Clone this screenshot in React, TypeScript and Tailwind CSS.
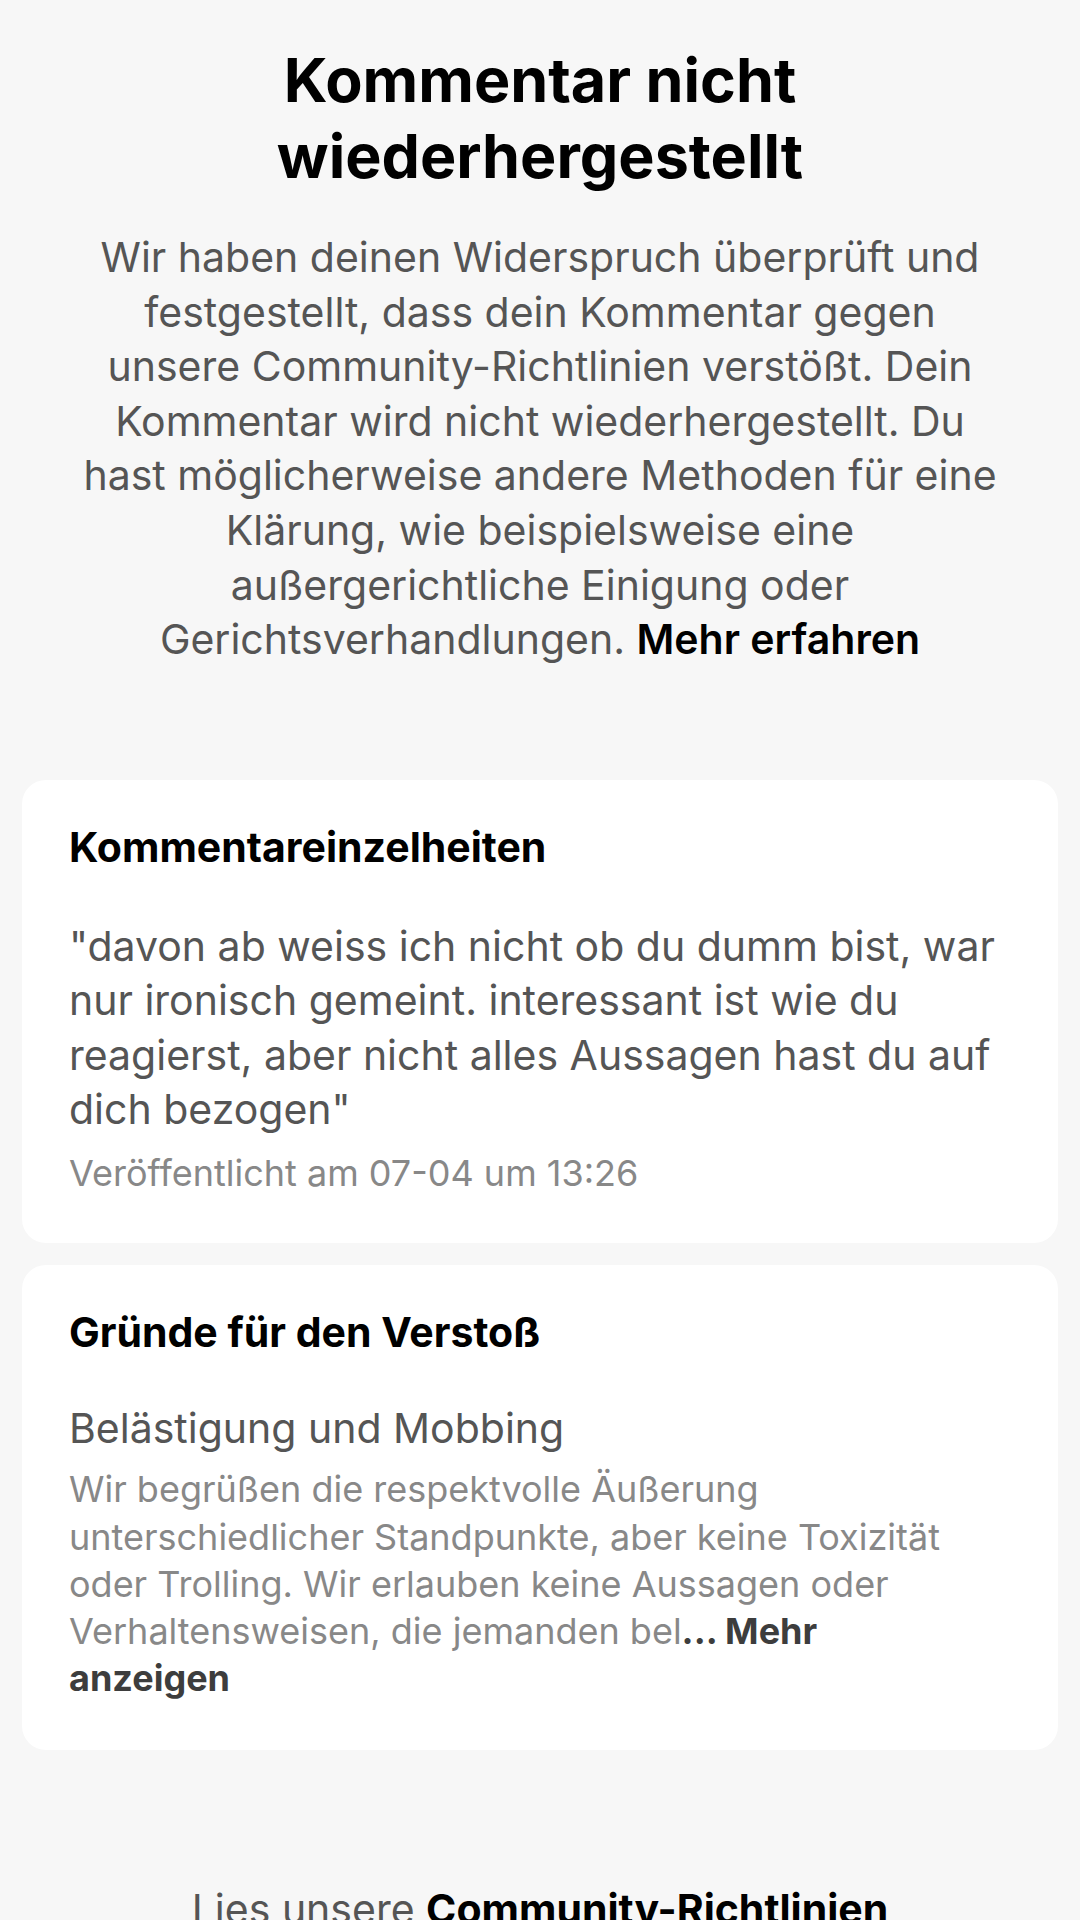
const font = { fontFamily: "Inter, Roboto, 'Noto Sans', sans-serif" };

function Card({ title, children }: { title: string; children: React.ReactNode }) {
  return (
    <section className="mx-[22px] rounded-[24px] bg-white px-[47px] pt-[45px] pb-[48px]">
      <h2 className="text-[41px] font-bold leading-[44px] text-black">{title}</h2>
      {children}
    </section>
  );
}

export default function App() {
  return (
    <div className="min-h-[1920px] w-[1080px] overflow-hidden bg-[#f7f7f7]" style={font}>
      <header className="flex flex-col items-center px-[75px] pt-[42px]">
        <h1 className="text-center text-[61px] font-bold leading-[76px] text-black">
          Kommentar nicht
          <br />
          wiederhergestellt
        </h1>
        <p className="mt-[36px] text-center text-[41px] leading-[54.6px] text-[#555]">
          Wir haben deinen Widerspruch überprüft und festgestellt, dass dein Kommentar gegen
          unsere Community-Richtlinien verstößt. Dein Kommentar wird nicht wiederhergestellt. Du
          hast möglicherweise andere Methoden für eine Klärung, wie beispielsweise eine
          außergerichtliche Einigung oder Gerichtsverhandlungen.{" "}
          <span className="font-semibold text-black">Mehr erfahren</span>
        </p>
      </header>

      <main className="mt-[113px] flex flex-col gap-[22px]">
        <Card title="Kommentareinzelheiten">
          <p className="mt-[50px] text-[41px] leading-[54.4px] text-[#555]">
            "davon ab weiss ich nicht ob du dumm bist, war nur ironisch gemeint. interessant ist wie
            du reagierst, aber nicht alles Aussagen hast du auf dich bezogen"
          </p>
          <p className="mt-[15px] text-[36px] leading-[44px] text-[#888]">
            Veröffentlicht am 07-04 um 13:26
          </p>
        </Card>

        <Card title="Gründe für den Verstoß">
          <p className="mt-[49px] text-[41px] leading-[50px] text-[#555]">Belästigung und Mobbing</p>
          <p className="mt-[13px] text-[36px] leading-[47.2px] text-[#888]">
            Wir begrüßen die respektvolle Äußerung unterschiedlicher Standpunkte, aber keine
            Toxizität oder Trolling. Wir erlauben keine Aussagen oder Verhaltensweisen, die jemanden
            bel
            <span className="font-bold text-[#3d3d3d]">
              ... Mehr
              <br />
              anzeigen
            </span>
          </p>
        </Card>
      </main>

      <footer className="mt-[134px] text-center text-[41px] leading-[50px] text-[#555]">
        Lies unsere <span className="font-bold text-black">Community-Richtlinien</span>
      </footer>
    </div>
  );
}
